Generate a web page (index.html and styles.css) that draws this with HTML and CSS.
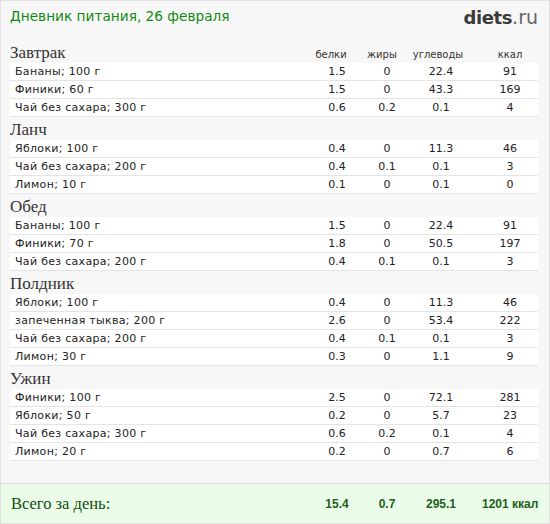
FILE: index.html
```html
<!DOCTYPE html>
<html lang="ru">
<head>
<meta charset="utf-8">
<title>Дневник питания</title>
<link rel="stylesheet" href="styles.css">
</head>
<body>
<div class="widget">
  <div class="top">
    <div class="title">Дневник питания, 26 февраля</div>
    <div class="logo"><span class="logo-b">diets</span><span class="logo-r">.ru</span></div>
  </div>
  <div class="content">
    <div class="meal">
      <div class="meal-head grid">
        <div class="meal-name">Завтрак</div>
        <div class="col-h h1">белки</div>
        <div class="col-h h2">жиры</div>
        <div class="col-h h3">углеводы</div>
        <div class="col-h last">ккал</div>
      </div>
      <div class="row grid"><div class="nm">Бананы; 100 г</div><div>1.5</div><div>0</div><div>22.4</div><div class="last">91</div></div>
      <div class="row grid"><div class="nm">Финики; 60 г</div><div>1.5</div><div>0</div><div>43.3</div><div class="last">169</div></div>
      <div class="row grid"><div class="nm">Чай без сахара; 300 г</div><div>0.6</div><div>0.2</div><div>0.1</div><div class="last">4</div></div>
    </div>
    <div class="meal">
      <div class="meal-head grid"><div class="meal-name">Ланч</div></div>
      <div class="row grid"><div class="nm">Яблоки; 100 г</div><div>0.4</div><div>0</div><div>11.3</div><div class="last">46</div></div>
      <div class="row grid"><div class="nm">Чай без сахара; 200 г</div><div>0.4</div><div>0.1</div><div>0.1</div><div class="last">3</div></div>
      <div class="row grid"><div class="nm">Лимон; 10 г</div><div>0.1</div><div>0</div><div>0.1</div><div class="last">0</div></div>
    </div>
    <div class="meal">
      <div class="meal-head grid"><div class="meal-name">Обед</div></div>
      <div class="row grid"><div class="nm">Бананы; 100 г</div><div>1.5</div><div>0</div><div>22.4</div><div class="last">91</div></div>
      <div class="row grid"><div class="nm">Финики; 70 г</div><div>1.8</div><div>0</div><div>50.5</div><div class="last">197</div></div>
      <div class="row grid"><div class="nm">Чай без сахара; 200 г</div><div>0.4</div><div>0.1</div><div>0.1</div><div class="last">3</div></div>
    </div>
    <div class="meal">
      <div class="meal-head grid"><div class="meal-name">Полдник</div></div>
      <div class="row grid"><div class="nm">Яблоки; 100 г</div><div>0.4</div><div>0</div><div>11.3</div><div class="last">46</div></div>
      <div class="row grid"><div class="nm">запеченная тыква; 200 г</div><div>2.6</div><div>0</div><div>53.4</div><div class="last">222</div></div>
      <div class="row grid"><div class="nm">Чай без сахара; 200 г</div><div>0.4</div><div>0.1</div><div>0.1</div><div class="last">3</div></div>
      <div class="row grid"><div class="nm">Лимон; 30 г</div><div>0.3</div><div>0</div><div>1.1</div><div class="last">9</div></div>
    </div>
    <div class="meal">
      <div class="meal-head grid"><div class="meal-name">Ужин</div></div>
      <div class="row grid"><div class="nm">Финики; 100 г</div><div>2.5</div><div>0</div><div>72.1</div><div class="last">281</div></div>
      <div class="row grid"><div class="nm">Яблоки; 50 г</div><div>0.2</div><div>0</div><div>5.7</div><div class="last">23</div></div>
      <div class="row grid"><div class="nm">Чай без сахара; 300 г</div><div>0.6</div><div>0.2</div><div>0.1</div><div class="last">4</div></div>
      <div class="row grid"><div class="nm">Лимон; 20 г</div><div>0.2</div><div>0</div><div>0.7</div><div class="last">6</div></div>
    </div>
  </div>
  <div class="footer grid">
    <div class="total-label">Всего за день:</div>
    <div class="tot">15.4</div>
    <div class="tot">0.7</div>
    <div class="tot">295.1</div>
    <div class="tot last">1201 ккал</div>
  </div>
</div>
</body>
</html>
```

FILE: styles.css
```css
html, body {
  margin: 0;
  padding: 0;
  background: #ffffff;
}

.widget {
  width: 548px;
  height: 522px;
  border: 1px solid #e2e2e2;
  background: #f7f7f7;
  display: flex;
  flex-direction: column;
}

.top {
  height: 39px;
  box-sizing: border-box;
  padding: 7px 11px 0 9px;
  display: flex;
  justify-content: space-between;
  align-items: flex-start;
}

.title {
  font-family: "DejaVu Sans", Verdana, sans-serif;
  font-size: 13.7px;
  color: #128a12;
  line-height: 17px;
}

.logo {
  font-family: "DejaVu Sans", sans-serif;
  font-size: 18px;
  line-height: 17px;
  padding-top: 1px;
}

.logo-b {
  font-weight: bold;
  color: #3a3a3a;
  letter-spacing: -0.4px;
}

.logo-r {
  color: #666666;
  font-weight: normal;
  font-size: 19px;
}

.content {
  padding: 0 11px 0 9px;
  flex: 1;
}

.grid {
  display: grid;
  grid-template-columns: 1fr 50px 50px 58px 68px;
  align-items: baseline;
}

.grid > div {
  text-align: center;
  white-space: nowrap;
}

.grid > .last {
  padding-left: 12px;
}

.grid > .meal-name,
.grid > .nm,
.grid > .total-label {
  text-align: left;
}

.meal-head {
  padding-top: 3px;
  height: 20px;
}

.meal-name {
  font-family: "Liberation Serif", "Times New Roman", serif;
  font-size: 17px;
  line-height: 20px;
  color: #333333;
}

.col-h {
  font-family: "DejaVu Sans", Verdana, sans-serif;
  font-size: 10px;
  color: #333333;
}

.col-h.h1 {
  padding-right: 12px;
}

.col-h.h2 {
  padding-right: 10px;
}

.col-h.h3 {
  padding-right: 6px;
}

.row {
  background: #ffffff;
  border-bottom: 1px solid #e4e4e4;
  height: 17px;
  line-height: 17px;
  font-family: "DejaVu Sans", Verdana, sans-serif;
  font-size: 11px;
  color: #222222;
}

.row > .nm {
  padding-left: 5px;
  letter-spacing: 0.3px;
}

.footer {
  height: 39px;
  border-top: 1px solid #dddddd;
  background: #eafce7;
  padding: 0 11px 0 10px;
  align-items: center;
}

.total-label {
  font-family: "Liberation Serif", "Times New Roman", serif;
  font-size: 16.5px;
  color: #124d12;
}

.tot {
  font-family: "Liberation Sans", Arial, sans-serif;
  font-weight: bold;
  font-size: 12px;
  color: #1d5e1d;
}
```
